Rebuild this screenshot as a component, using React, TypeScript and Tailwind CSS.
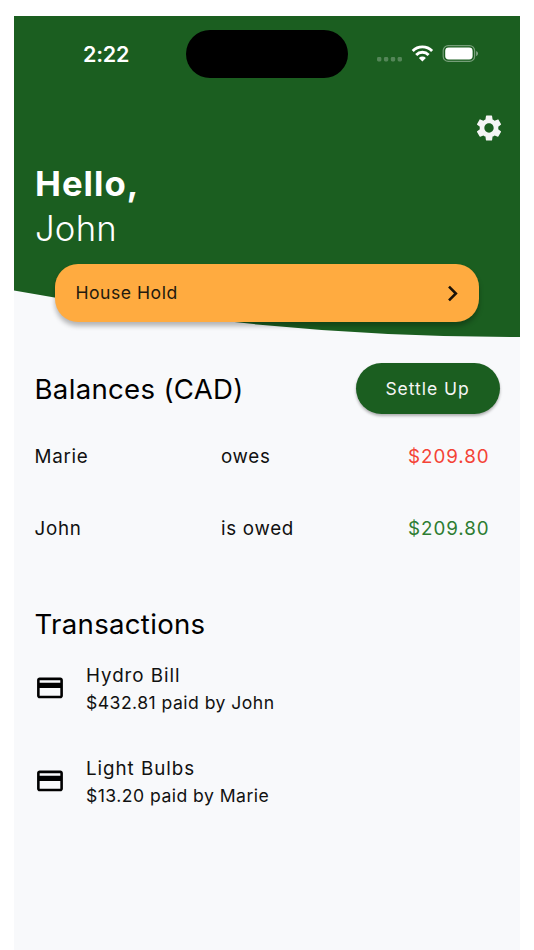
import React from "react";

function StatusIcons() {
  return (
    <svg width="104" height="20" viewBox="376 43 104 20" className="block">
      <g fill="#fff" fillOpacity="0.25">
        <rect x="377" y="57" width="4.4" height="4.4" rx="1.4" />
        <rect x="383.9" y="57" width="4.4" height="4.4" rx="1.4" />
        <rect x="390.8" y="57" width="4.4" height="4.4" rx="1.4" />
        <rect x="397.6" y="57" width="4.4" height="4.4" rx="1.4" />
      </g>
      <g fill="none" stroke="#fff" strokeWidth="2.9">
        <path d="M412.7 50.9 A13.7 13.7 0 0 1 432.1 50.9" />
        <path d="M416.2 54.9 A8.7 8.7 0 0 1 428.6 54.9" />
      </g>
      <path d="M418.9 57.9 A5.1 5.1 0 0 1 425.9 57.9 L422.4 61.4 Z" fill="#fff" />
      <rect x="443.2" y="45.6" width="31.4" height="15.8" rx="5" fill="none" stroke="#fff" strokeOpacity="0.4" strokeWidth="1.2" />
      <rect x="445.2" y="47.6" width="27.4" height="11.8" rx="3.4" fill="#fff" />
      <path d="M476.1 50.9 V56.1 C477.3 55.7 478 54.7 478 53.5 C478 52.3 477.3 51.3 476.1 50.9 Z" fill="#fff" fillOpacity="0.45" />
    </svg>
  );
}

function GearIcon() {
  return (
    <svg width="31" height="31" viewBox="-0.4 -0.4 24 24" fill="#f5f5f5" className="block">
      <path d="M19.14 12.94c.04-.3.06-.61.06-.94 0-.32-.02-.64-.07-.94l2.03-1.58a.49.49 0 0 0 .12-.61l-1.92-3.32a.488.488 0 0 0-.59-.22l-2.39.96c-.5-.38-1.03-.7-1.62-.94l-.36-2.54a.484.484 0 0 0-.48-.41h-3.84c-.24 0-.43.17-.47.41l-.36 2.54c-.59.24-1.13.57-1.62.94l-2.39-.96c-.22-.08-.47 0-.59.22L2.74 8.87c-.12.21-.08.47.12.61l2.03 1.58c-.05.3-.09.63-.09.94s.02.64.07.94l-2.03 1.58a.49.49 0 0 0-.12.61l1.92 3.32c.12.22.37.29.59.22l2.39-.96c.5.38 1.03.7 1.62.94l.36 2.54c.05.24.24.41.48.41h3.84c.24 0 .44-.17.47-.41l.36-2.54c.59-.24 1.13-.56 1.62-.94l2.39.96c.22.08.47 0 .59-.22l1.92-3.32c.12-.22.07-.47-.12-.61l-2.01-1.58zM12 15.6c-1.98 0-3.6-1.62-3.6-3.6s1.62-3.6 3.6-3.6 3.6 1.62 3.6 3.6-1.62 3.6-3.6 3.6z" />
    </svg>
  );
}

function CardIcon() {
  return (
    <svg width="31" height="31" viewBox="0.4 -0.3 24 24" fill="#000" className="block shrink-0">
      <path d="M20 4H4c-1.11 0-1.99.89-1.99 2L2 18c0 1.11.89 2 2 2h16c1.11 0 2-.89 2-2V6c0-1.11-.89-2-2-2zm0 14H4v-6h16v6zm0-10H4V6h16v2z" />
    </svg>
  );
}

function BalanceRow({ name, status, amount, color }: { name: string; status: string; amount: string; color: string }) {
  return (
    <div className="flex h-[72px] items-center text-[18.8px] tracking-[0.7px] text-[#111]">
      <span className="w-[186.5px]">{name}</span>
      <span className="w-[187px]">{status}</span>
      <span className={`tracking-[0.95px] ${color}`}>{amount}</span>
    </div>
  );
}

function Transaction({ title, detail }: { title: string; detail: string }) {
  return (
    <div className="flex h-[93px] items-start gap-[20.5px]">
      <div className="pt-[11px]">
        <CardIcon />
      </div>
      <div className="text-[#111]">
        <div className="h-7 text-[18.8px] leading-[30px] tracking-[0.95px]">{title}</div>
        <div className="h-7 text-[17.6px] leading-[27px] tracking-[0.46px]">{detail}</div>
      </div>
    </div>
  );
}

export default function App() {
  return (
    <div className="h-[950px] w-[534px] overflow-hidden bg-white pl-[14px] pt-[16px] font-['Inter',sans-serif]">
      <div className="h-[934px] w-[506px] bg-[#f8f9fb]">
        <header className="relative h-[321px]">
          <svg width="506" height="321" viewBox="0 0 506 321" className="absolute left-0 top-0">
            <path d="M0 0 H506 V321 Q253 321 0 274.5 Z" fill="#1b5e20" />
          </svg>
          <div className="relative flex h-[76px] items-center pl-[69px]">
            <span className="w-[103px] text-[21.5px] font-semibold leading-6 tracking-[-0.2px] text-white">2:22</span>
            <div className="h-[48px] w-[161.5px] rounded-full bg-black" />
            <div className="ml-[28px] pb-[3px]">
              <StatusIcons />
            </div>
          </div>
          <div className="relative flex h-[69px] justify-end pr-[16px] pt-[20px]">
            <GearIcon />
          </div>
          <div className="relative pl-[21px] text-[34.7px] leading-[44px] text-white">
            <div className="font-bold tracking-[1px]">Hello,</div>
            <div className="h-11 font-light leading-[46px] tracking-[0.2px]">John</div>
          </div>
          <div className="relative ml-[41px] mt-[15px] flex h-[58px] w-[424px] items-center justify-between rounded-[23px] bg-[#ffab40] pl-[20.5px] pr-[11px] shadow-[0_4px_5px_rgba(0,0,0,0.28)]">
            <span className="pt-px text-[17.6px] tracking-[0.5px] text-[#231a0e]">House Hold</span>
            <svg width="31" height="31" viewBox="0 0 24 24" fill="#1a1208">
              <path d="M10 6 8.59 7.41 13.17 12l-4.58 4.59L10 18l6-6z" />
            </svg>
          </div>
        </header>

        <section className="pl-[20.5px] pt-[26px]">
          <div className="flex h-[51px] items-center justify-between pr-[20.5px] text-black">
            <h2 className="pt-[3px] text-[27.6px] tracking-[0.3px]">Balances (CAD)</h2>
            <button className="h-[51px] w-[144px] rounded-full bg-[#1b5e20] pt-[2px] text-[17.5px] font-normal tracking-[0.95px] text-[#f5f5f5] shadow-[0_2px_3px_rgba(0,0,0,0.3)]">Settle Up</button>
          </div>
          <div className="pt-[7px]">
            <BalanceRow name="Marie" status="owes" amount="$209.80" color="text-[#f44336]" />
            <BalanceRow name="John" status="is owed" amount="$209.80" color="text-[#2e7d32]" />
          </div>
        </section>

        <section className="pl-[20.5px] pt-[39px]">
          <h2 className="h-[57px] text-[27.6px] leading-[40px] tracking-[0.3px] text-black">Transactions</h2>
          <Transaction title="Hydro Bill" detail="$432.81 paid by John" />
          <Transaction title="Light Bulbs" detail="$13.20 paid by Marie" />
        </section>
      </div>
    </div>
  );
}
